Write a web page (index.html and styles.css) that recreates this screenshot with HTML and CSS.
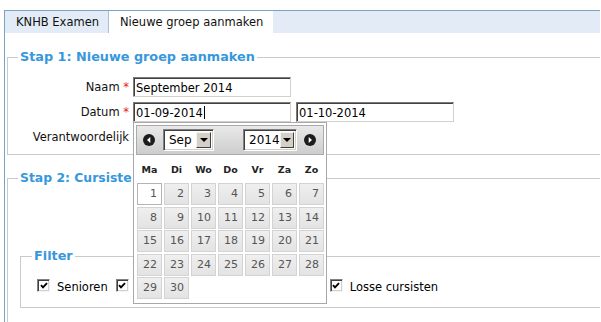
FILE: index.html
```html
<!DOCTYPE html>
<html lang="nl">
<head>
<meta charset="utf-8">
<title>Nieuwe groep aanmaken</title>
<link rel="stylesheet" href="styles.css">
</head>
<body>
<div class="panel">
  <div class="tabs">
    <div class="tab">KNHB Examen</div>
    <div class="tab active">Nieuwe groep aanmaken</div>
  </div>
  <fieldset class="fs fs1">
    <legend>Stap 1: Nieuwe groep aanmaken</legend>
    <div class="form">
      <label class="lbl">Naam <span class="req">*</span></label>
      <div class="inputs"><span class="inp">September 2014</span></div>
      <label class="lbl">Datum <span class="req">*</span></label>
      <div class="inputs"><span class="inp">01-09-2014<span class="caret"></span></span><span class="inp">01-10-2014</span></div>
      <label class="lbl">Verantwoordelijk</label>
      <div class="inputs"><span class="inp"></span></div>
    </div>
  </fieldset>
  <fieldset class="fs fs2">
    <legend class="cut">Stap 2: Cursiste</legend>
    <div class="spacer"></div>
    <fieldset class="fs filter">
      <legend>Filter</legend>
      <div class="checks">
        <div class="chk"><span class="cb"><svg width="8" height="7" viewBox="0 0 8 7"><polyline points="1,3.2 3,5.3 7,1.2" fill="none" stroke="#000" stroke-width="1.9"/></svg></span><span class="chk-label">Senioren</span></div>
        <div class="chk"><span class="cb"><svg width="8" height="7" viewBox="0 0 8 7"><polyline points="1,3.2 3,5.3 7,1.2" fill="none" stroke="#000" stroke-width="1.9"/></svg></span><span class="chk-label wide"></span></div>
        <div class="chk"><span class="cb"><svg width="8" height="7" viewBox="0 0 8 7"><polyline points="1,3.2 3,5.3 7,1.2" fill="none" stroke="#000" stroke-width="1.9"/></svg></span><span class="chk-label">Losse cursisten</span></div>
      </div>
    </fieldset>
  </fieldset>
</div>

<div class="dp">
  <div class="dp-head">
    <svg class="nav" width="12" height="12" viewBox="0 0 12 12"><circle cx="6" cy="6" r="6" fill="#1c1c1c"/><polygon points="7.3,3 7.3,9 4,6" fill="#fff"/></svg>
    <div class="sel month"><span class="sel-txt">Sep</span><span class="sel-btn"><span class="tri"></span></span></div>
    <div class="sel year"><span class="sel-txt">2014</span><span class="sel-btn"><span class="tri"></span></span></div>
    <svg class="nav next" width="12" height="12" viewBox="0 0 12 12"><circle cx="6" cy="6" r="6" fill="#1c1c1c"/><polygon points="4.7,3 4.7,9 8,6" fill="#fff"/></svg>
  </div>
  <div class="dow">
    <span>Ma</span><span>Di</span><span>Wo</span><span>Do</span><span>Vr</span><span>Za</span><span>Zo</span>
  </div>
  <div class="days">
    <span class="day today">1</span><span class="day">2</span><span class="day">3</span><span class="day">4</span><span class="day">5</span><span class="day">6</span><span class="day">7</span>
    <span class="day">8</span><span class="day">9</span><span class="day">10</span><span class="day">11</span><span class="day">12</span><span class="day">13</span><span class="day">14</span>
    <span class="day">15</span><span class="day">16</span><span class="day">17</span><span class="day">18</span><span class="day">19</span><span class="day">20</span><span class="day">21</span>
    <span class="day">22</span><span class="day">23</span><span class="day">24</span><span class="day">25</span><span class="day">26</span><span class="day">27</span><span class="day">28</span>
    <span class="day">29</span><span class="day">30</span>
  </div>
</div>
</body>
</html>
```
FILE: styles.css
```css
* { box-sizing: border-box; }

html, body { height: 100%; }

body {
  margin: 0;
  padding: 10px 0 0 4px;
  font-family: "DejaVu Sans", Verdana, sans-serif;
  font-size: 11.5px;
  color: #111;
  background: #fff;
  overflow: hidden;
  position: relative;
}

.panel {
  width: 596px;
  height: 312px;
  overflow: hidden;
  border-top: 1px solid #7aa2c4;
  border-left: 1px solid #7aa2c4;
}

.tabs {
  display: flex;
  height: 22px;
  background: #e3ecf6;
}

.tab {
  width: 104px;
  padding-left: 11px;
  line-height: 22px;
  border-right: 1px solid #a9bfd2;
  white-space: nowrap;
}

.tab.active {
  width: 164px;
  background: #fff;
  border-right: 0;
}

fieldset.fs {
  border: 1px solid #cacaca;
  min-width: 0;
}

.fs legend {
  padding: 0 2px;
  font-weight: bold;
  font-size: 12.8px;
  line-height: 16px;
  color: #3797dd;
  white-space: nowrap;
}

.fs legend.cut {
  font-size: 12.4px;
}

.fs1 {
  margin: 16px -4px 0 2px;
  padding: 12px 0 7px 10px;
}

.fs2 {
  margin: 15px -4px 0 2px;
  padding: 0 0 40px 10px;
}

.spacer { height: 62px; }

.filter {
  margin: 0 -4px 0 2px;
  padding: 12px 0 13px 11px;
}

.form {
  display: grid;
  grid-template-columns: 111px auto;
  column-gap: 4px;
  row-gap: 5px;
  align-items: center;
}

.lbl {
  text-align: right;
  white-space: nowrap;
}

.req { color: #e2231a; }

.inputs {
  display: flex;
  gap: 5px;
}

.inp {
  display: flex;
  align-items: center;
  width: 158px;
  height: 20px;
  padding: 1px 0 0 2px;
  border-style: solid;
  border-width: 1px;
  border-color: #7b7b7b #d4d0c8 #d4d0c8 #7b7b7b;
  box-shadow: inset 1px 1px 0 #404040;
  background: #fff;
  color: #000;
  white-space: nowrap;
}

.caret {
  display: inline-block;
  width: 1px;
  height: 13px;
  margin-left: 1px;
  background: #000;
}

.checks {
  display: flex;
  align-items: center;
  height: 18px;
}

.chk {
  display: flex;
  align-items: center;
}

.chk:first-child { margin-left: 5px; }

.cb {
  display: flex;
  align-items: center;
  justify-content: center;
  width: 13px;
  height: 13px;
  border: 1px solid;
  border-color: #808080 #f4f4f4 #f4f4f4 #808080;
  box-shadow: inset 1px 1px 0 #404040, inset -1px -1px 0 #d4d0c8;
  background: #fff;
  flex: none;
}

.chk-label {
  margin-left: 7px;
  margin-right: 8px;
  padding-top: 3px;
  white-space: nowrap;
  color: #000;
}

.chk-label.wide { width: 186px; height: 14px; }

/* datepicker */
.dp {
  position: absolute;
  left: 133px;
  top: 122px;
  width: 194px;
  height: 182px;
  padding: 2px;
  border: 1px solid #a8a8a8;
  background: #fff;
}

.dp-head {
  display: flex;
  align-items: center;
  height: 30px;
  padding: 0 6px;
  border: 1px solid #aaaaaa;
  background: linear-gradient(#e9e9e9, #cdcdcd);
}

.nav { flex: none; display: block; }
.nav.next { margin-left: 7px; }

.sel {
  display: flex;
  height: 22px;
  border: 1px solid;
  border-color: #808080 #ffffff #ffffff #808080;
  box-shadow: inset 1px 1px 0 #404040, inset -1px -1px 0 #d4d0c8;
  background: #fff;
  padding: 1px;
  color: #000;
}

.sel.month { width: 51px; margin-left: 8px; }
.sel.year { width: 54px; margin-left: 29px; }

.sel-txt {
  flex: 1;
  padding-left: 4px;
  line-height: 18px;
  font-size: 12px;
}

.sel-btn {
  display: flex;
  align-items: center;
  justify-content: center;
  width: 15px;
  margin: 1px 1px 1px 0;
  border: 1px solid;
  border-color: #f4f4f4 #404040 #404040 #f4f4f4;
  background: #d4d0c8;
}

.tri {
  width: 0;
  height: 0;
  border-left: 4px solid transparent;
  border-right: 4px solid transparent;
  border-top: 4px solid #000;
}

.dow {
  display: grid;
  grid-template-columns: repeat(7, 25px);
  column-gap: 2px;
  height: 28px;
  align-items: center;
  margin-left: 1px;
  font-weight: bold;
  font-size: 9.5px;
  text-align: center;
  color: #222;
}

.days {
  display: grid;
  grid-template-columns: repeat(7, 25px);
  grid-auto-rows: 22px;
  column-gap: 2px;
  row-gap: 1.5px;
  margin-left: 1px;
}

.day {
  border: 1px solid #d3d3d3;
  background: linear-gradient(#efefef, #e3e3e3);
  color: #555;
  font-size: 11px;
  line-height: 20px;
  text-align: right;
  padding-right: 4px;
}

.day.today {
  background: #fff;
  border-color: #b4b4b4;
}
```
